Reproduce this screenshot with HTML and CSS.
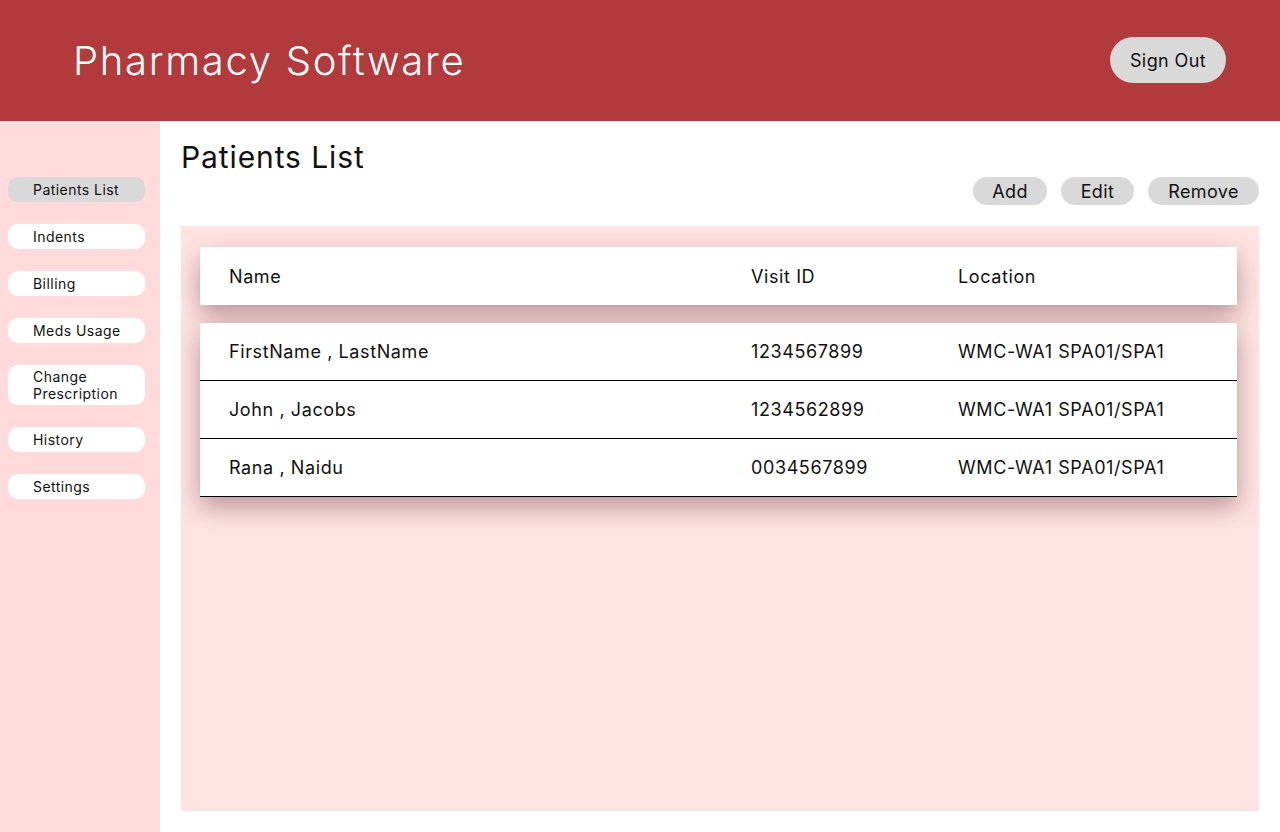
FILE: index.html
```html
<!DOCTYPE html>
<html lang="en">
<head>
<meta charset="utf-8">
<title>Pharmacy Software</title>
<link rel="stylesheet" href="styles.css">
</head>
<body>
<header class="topbar">
  <h1 class="brand">Pharmacy Software</h1>
  <button class="signout">Sign Out</button>
</header>
<div class="layout">
  <nav class="sidebar">
    <a class="nav-item active">Patients List</a>
    <a class="nav-item">Indents</a>
    <a class="nav-item">Billing</a>
    <a class="nav-item">Meds Usage</a>
    <a class="nav-item tall">Change<br>Prescription</a>
    <a class="nav-item">History</a>
    <a class="nav-item">Settings</a>
  </nav>
  <main class="main">
    <h2 class="page-title">Patients List</h2>
    <div class="actions">
      <button class="pill add">Add</button>
      <button class="pill edit">Edit</button>
      <button class="pill remove">Remove</button>
    </div>
    <section class="panel">
      <div class="card head-card">
        <div class="row">
          <span>Name</span><span>Visit ID</span><span>Location</span>
        </div>
      </div>
      <div class="card body-card">
        <div class="row line"><span>FirstName , LastName</span><span>1234567899</span><span>WMC-WA1 SPA01/SPA1</span></div>
        <div class="row line"><span>John , Jacobs</span><span>1234562899</span><span>WMC-WA1 SPA01/SPA1</span></div>
        <div class="row line"><span>Rana , Naidu</span><span>0034567899</span><span>WMC-WA1 SPA01/SPA1</span></div>
      </div>
    </section>
  </main>
</div>
</body>
</html>
```
FILE: styles.css
```css
* { box-sizing: border-box; }
html, body { margin: 0; padding: 0; }
body {
  font-family: Inter, "DejaVu Sans", sans-serif;
  color: #111;
  background: #fff;
  width: 1280px;
  height: 832px;
  overflow: hidden;
}
.topbar {
  height: 121px;
  background: #b33a3c;
  display: flex;
  align-items: center;
  justify-content: space-between;
  padding: 0 54px 0 73px;
}
.brand {
  margin: 0;
  font-size: 40px;
  font-weight: 300;
  color: #fff;
  letter-spacing: 1.7px;
}
.signout {
  width: 116px;
  height: 46px;
  border: none;
  border-radius: 23px;
  background: #d9d9d9;
  font-family: inherit;
  font-size: 18px;
  letter-spacing: 0.4px;
  color: #111;
  margin-top: -1px;
}
.layout {
  display: flex;
  height: 711px;
}
.sidebar {
  width: 160px;
  background: #ffdbdb;
  padding: 56px 15px 0 8px;
  display: flex;
  flex-direction: column;
  gap: 22px;
}
.nav-item {
  display: flex;
  align-items: center;
  height: 25px;
  padding-left: 25px;
  border-radius: 10px;
  background: #fff;
  font-size: 14px;
  letter-spacing: 0.45px;
  color: #111;
}
.nav-item.active { background: #d9d9d9; }
.nav-item.tall { height: 40px; line-height: 17px; }
.main {
  flex: 1;
  padding: 16px 21px 21px 21px;
  display: flex;
  flex-direction: column;
}
.page-title {
  margin: 0;
  font-size: 30px;
  font-weight: 400;
  line-height: 40px;
  height: 40px;
  letter-spacing: 0.9px;
}
.actions {
  display: flex;
  justify-content: flex-end;
  gap: 14px;
}
.pill {
  height: 28px;
  border: none;
  border-radius: 14px;
  background: #d9d9d9;
  font-family: inherit;
  font-size: 18px;
  letter-spacing: 0.4px;
  color: #111;
  padding: 0;
}
.pill.add { width: 74px; }
.pill.edit { width: 73px; }
.pill.remove { width: 111px; }
.panel {
  flex: 1;
  margin-top: 21px;
  background: #ffe3e3;
  padding: 21px 22px 0 19px;
}
.card {
  background: #fff;
  box-shadow: 0 10px 24px rgba(70, 10, 10, 0.36);
}
.body-card { margin-top: 18px; }
.row {
  display: grid;
  grid-template-columns: 522px 207px 1fr;
  align-items: center;
  height: 58px;
  padding-left: 29px;
  font-size: 18px;
  letter-spacing: 0.6px;
}
.row.line { border-bottom: 1px solid #000; }
```
